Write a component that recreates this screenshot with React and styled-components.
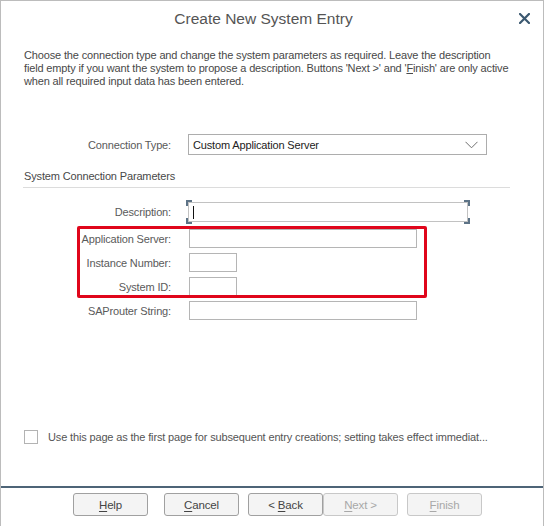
import React from "react";
import styled, { createGlobalStyle } from "styled-components";

const Global = createGlobalStyle`
  html, body { margin: 0; padding: 0; background: #ffffff; }
  body { font-family: "Liberation Sans", Arial, sans-serif; }
  * { box-sizing: border-box; }
`;

const Window = styled.div`
  width: 544px;
  height: 526px;
  border: 1px solid #bcbcbc;
  border-bottom: none;
  background: #ffffff;
  display: flex;
  flex-direction: column;
  font-size: 11px;
  letter-spacing: -0.15px;
  color: #555555;
`;

const Header = styled.div`
  height: 35px;
  display: flex;
  align-items: center;
  padding-right: 9px;
`;

const Title = styled.div`
  flex: 1;
  text-align: center;
  padding-left: 12px;
  font-size: 15.5px;
  letter-spacing: 0;
  color: #555555;
`;

const Close = styled.button`
  width: 20px;
  height: 20px;
  border: none;
  background: transparent;
  padding: 0;
  display: flex;
  align-items: center;
  justify-content: center;
  cursor: pointer;
`;

const Intro = styled.p`
  margin: 13px 24px 0 23px;
  line-height: 13px;
  color: #484848;
  white-space: nowrap;
`;

const Row = styled.div`
  display: grid;
  grid-template-columns: 146px 1fr;
  column-gap: 17px;
  align-items: center;
  padding-left: 24px;
  margin-top: ${(p) => p.$top || 0}px;
`;

const Label = styled.label`
  text-align: right;
  color: #5a5a5a;
  white-space: nowrap;
`;

const Select = styled.div`
  width: 299px;
  height: 21px;
  border: 1px solid #adadad;
  display: flex;
  align-items: center;
  justify-content: space-between;
  padding: 0 8px 0 4px;
  color: #222222;
`;

const SectionTitle = styled.div`
  margin: 15px 33px 0 22px;
  padding: 0 0 5px 1px;
  border-bottom: 1px solid #dcdcdc;
  color: #484848;
  line-height: 12px;
`;

const Field = styled.div`
  position: relative;
  width: ${(p) => p.$w}px;
  height: ${(p) => p.$h || 19}px;
  border: 1px solid ${(p) => (p.$focus ? "#c2c2c2" : "#b5b5b5")};
  background: #ffffff;
  display: flex;
  align-items: center;
  padding-left: 4px;
  margin-left: ${(p) => p.$shift || 0}px;
`;

const Caret = styled.span`
  width: 1px;
  height: 13px;
  background: #111111;
`;

const Corner = styled.span`
  position: absolute;
  width: 6px;
  height: 6px;
  border-color: #5d7386;
  border-style: solid;
  border-width: 0;
  ${(p) => (p.$v === "t" ? "top: -3px; border-top-width: 2px;" : "bottom: -3px; border-bottom-width: 2px;")}
  ${(p) => (p.$h === "l" ? "left: -3px; border-left-width: 2px;" : "right: -3px; border-right-width: 2px;")}
`;

const Group = styled.div`
  position: relative;
  margin-top: 7px;
  display: flex;
  flex-direction: column;
  gap: 5px;
`;

const Highlight = styled.div`
  position: absolute;
  left: 76px;
  top: -3px;
  width: 350px;
  height: 72px;
  border: 3px solid #e0061b;
  border-radius: 2px;
  pointer-events: none;
`;

const Spacer = styled.div`
  flex: 1;
`;

const CheckRow = styled.label`
  display: flex;
  align-items: center;
  gap: 10px;
  padding-left: 23px;
  margin-top: 110px;
  color: #555555;
`;

const Box = styled.span`
  width: 14px;
  height: 14px;
  border: 1px solid #b3b3b3;
  background: #ffffff;
`;

const Footer = styled.div`
  border-top: 2px solid #4d6477;
  height: 40px;
  display: flex;
  align-items: flex-start;
  padding: 5px 0 0 72px;
`;

const Button = styled.button`
  width: 75px;
  height: 23px;
  margin-left: ${(p) => p.$gap || 0}px;
  border: 1px solid ${(p) => (p.disabled ? "#c8c8c8" : "#a0a0a0")};
  border-radius: 3px;
  background: #f4f4f4;
  color: ${(p) => (p.disabled ? "#a8a8a8" : "#444444")};
  font-family: "Liberation Sans", Arial, sans-serif;
  font-size: 11.5px;
  letter-spacing: -0.15px;
  padding: 0;
  u { text-decoration: underline; text-underline-offset: 2px; }
`;

const Chevron = () => (
  <svg width="13" height="8" viewBox="0 0 13 8">
    <polyline points="0.5,0.8 6.5,6.8 12.5,0.8" fill="none" stroke="#6f6f6f" strokeWidth="1" />
  </svg>
);

const CloseIcon = () => (
  <svg width="11" height="11" viewBox="0 0 11 11">
    <path d="M1 1 L10 10 M10 1 L1 10" stroke="#3b5870" strokeWidth="2.2" strokeLinecap="square" />
  </svg>
);

export default function App() {
  return (
    <>
      <Global />
      <Window>
        <Header>
          <Title>Create New System Entry</Title>
          <Close aria-label="Close"><CloseIcon /></Close>
        </Header>
        <Intro>
          Choose the connection type and change the system parameters as required. Leave the description
          <br />
          field empty if you want the system to propose a description. Buttons 'Next &gt;' and '<u>F</u>inish' are only active
          <br />
          when all required input data has been entered.
        </Intro>

        <Row $top={46}>
          <Label>Connection Type:</Label>
          <Select>
            <span>Custom Application Server</span>
            <Chevron />
          </Select>
        </Row>

        <SectionTitle>System Connection Parameters</SectionTitle>

        <Row $top={14}>
          <Label>Description:</Label>
          <Field $w={280} $h={20} $focus>
            <Caret />
            <Corner $v="t" $h="l" />
            <Corner $v="t" $h="r" />
            <Corner $v="b" $h="l" />
            <Corner $v="b" $h="r" />
          </Field>
        </Row>

        <Group>
          <Row>
            <Label>Application Server:</Label>
            <Field $w={228} $shift={1} />
          </Row>
          <Row>
            <Label>Instance Number:</Label>
            <Field $w={48} $shift={1} />
          </Row>
          <Row>
            <Label>System ID:</Label>
            <Field $w={48} $shift={1} />
          </Row>
          <Row>
            <Label>SAProuter String:</Label>
            <Field $w={228} $shift={1} />
          </Row>
          <Highlight />
        </Group>

        <CheckRow>
          <Box />
          <span>Use this page as the first page for subsequent entry creations; setting takes effect immediat...</span>
        </CheckRow>

        <Spacer />

        <Footer>
          <Button><u>H</u>elp</Button>
          <Button $gap={16}><u>C</u>ancel</Button>
          <Button $gap={9}>&lt; <u>B</u>ack</Button>
          <Button disabled><u>N</u>ext &gt;</Button>
          <Button $gap={9} disabled><u>F</u>inish</Button>
        </Footer>
      </Window>
    </>
  );
}
